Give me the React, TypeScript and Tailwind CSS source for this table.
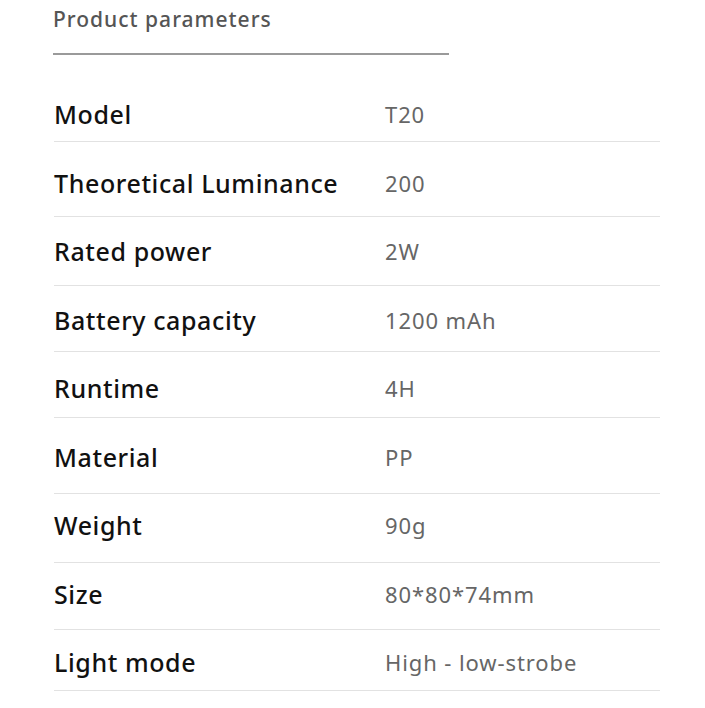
import React from "react";

const rows = [
  { k: "Model", v: "T20", cls: "h-[43px] pt-[0px]" },
  { k: "Theoretical Luminance", v: "200", cls: "h-[75px] pt-[26px]" },
  { k: "Rated power", v: "2W", cls: "h-[69px] pt-[19px]" },
  { k: "Battery capacity", v: "1200 mAh", cls: "h-[66px] pt-[19px]" },
  { k: "Runtime", v: "4H", cls: "h-[66px] pt-[21px]" },
  { k: "Material", v: "PP", cls: "h-[76px] pt-[24px]" },
  { k: "Weight", v: "90g", cls: "h-[69px] pt-[16px]" },
  { k: "Size", v: "80*80*74mm", cls: "h-[67px] pt-[16px]" },
  { k: "Light mode", v: "High - low-strobe", cls: "h-[61px] pt-[17px]" },
];

export default function App() {
  return (
    <div
      className="w-[705px] h-[708px] bg-white overflow-hidden"
      style={{ fontFamily: '"Noto Sans", "Open Sans", sans-serif' }}
    >
      <div className="pl-[53px] pt-[4px]">
        <div className="text-[21px] leading-[30px] tracking-[1px] text-[#555555] font-medium">
          Product parameters
        </div>
        <div className="mt-[19px] w-[396px] h-[2px] bg-[#9a9a9a]" />
      </div>
      <div className="ml-[54px] w-[606px] mt-[44px]">
        {rows.map((r) => (
          <div
            key={r.k}
            className={`${r.cls} flex items-start border-b border-[#e2e2e2] box-border`}
          >
            <div className="w-[331px] shrink-0 text-[25px] leading-[30px] tracking-[0.6px] font-medium text-[#111111] whitespace-nowrap">
              {r.k}
            </div>
            <div className="text-[22px] leading-[30px] tracking-[0.9px] text-[#666666] whitespace-nowrap">
              {r.v}
            </div>
          </div>
        ))}
      </div>
    </div>
  );
}
